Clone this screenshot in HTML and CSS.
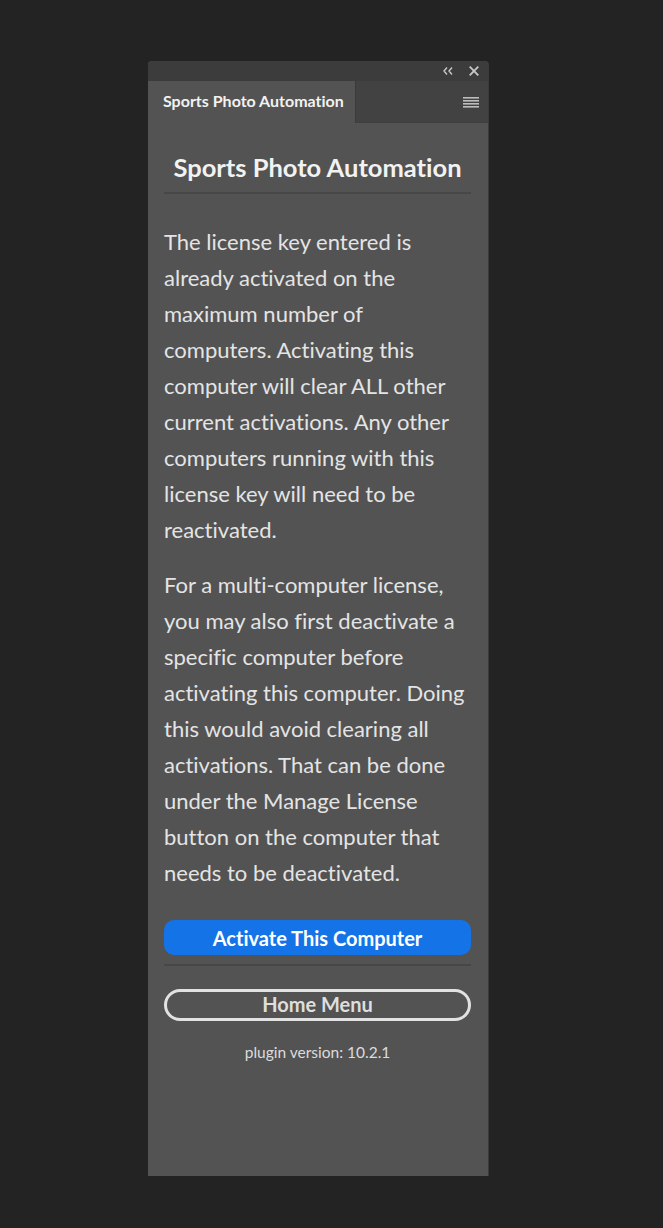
FILE: index.html
```html
<!DOCTYPE html>
<html lang="en">
<head>
  <meta charset="UTF-8" />
  <title>Sports Photo Automation</title>
  <link rel="stylesheet" href="styles.css">
</head>
<body>

  <div class="panel">
    <div class="panel-top">
      <svg class="collapse" width="10" height="8" viewBox="0 0 10 8">
        <path d="M4 0.5 L1 4 L4 7.5 M9 0.5 L6 4 L9 7.5" fill="none" stroke="#c8c8c8" stroke-width="1.4" />
      </svg>
      <svg class="close" width="10" height="10" viewBox="0 0 10 10">
        <path d="M0.7 0.7 L9.3 9.3 M9.3 0.7 L0.7 9.3" stroke="#c8c8c8" stroke-width="1.8" />
      </svg>
    </div>

    <div class="tab-bar">
      <div class="tab">Sports Photo Automation</div>
      <div class="tab-rest">
        <svg class="menu" width="16" height="11" viewBox="0 0 16 11">
          <rect x="0" y="0" width="16" height="1.6" fill="#bdbdbd" />
          <rect x="0" y="3" width="16" height="1.6" fill="#bdbdbd" />
          <rect x="0" y="6" width="16" height="1.6" fill="#bdbdbd" />
          <rect x="0" y="9" width="16" height="1.6" fill="#bdbdbd" />
        </svg>
      </div>
    </div>

    <div class="content">
      <h1>Sports Photo Automation</h1>
      <hr>

      <p>The license key entered is already activated on the maximum number of computers. Activating this computer will clear ALL other current activations. Any other computers running with this license key will need to be reactivated.</p>

      <p>For a multi-computer license, you may also first deactivate a specific computer before activating this computer. Doing this would avoid clearing all activations. That can be done under the Manage License button on the computer that needs to be deactivated.</p>

      <button class="btn-activate">Activate This Computer</button>
      <hr class="btn-rule">
      <button class="btn-home">Home Menu</button>

      <div class="version">plugin version: 10.2.1</div>
    </div>
  </div>

</body>
</html>
```

FILE: styles.css
```css
body {
  margin: 0;
  padding: 0;
  background-color: #232323;
  font-family: Lato, "Open Sans", sans-serif;
  font-variant-ligatures: none;
  color: #e6e6e6;
}

.panel {
  width: 340px;
  height: 1115px;
  margin: 61px 0 0 148px;
  background-color: #535353;
  border-radius: 4px 4px 0 0;
  overflow: hidden;
  box-shadow: 1px 0 0 #3a3a3a, 0 1px 0 #2c2c2c;
}

.panel-top {
  height: 20px;
  background-color: #3c3c3c;
  display: flex;
  align-items: center;
  justify-content: flex-end;
  gap: 16px;
  padding-right: 9px;
}

.tab-bar {
  display: flex;
  height: 42px;
}

.tab {
  width: 207px;
  padding: 10px 0 0 15px;
  box-sizing: border-box;
  font-size: 16px;
  font-weight: bold;
  color: #f2f2f2;
}

.tab-rest {
  flex: 1;
  background-color: #424242;
  border-left: 1px solid #3a3a3a;
  border-bottom: 1px solid #3e3e3e;
  display: flex;
  justify-content: flex-end;
  padding: 16px 9px 0 0;
}

.content {
  padding: 0 17px 0 16px;
}

h1 {
  margin: 0;
  padding-top: 29px;
  text-align: center;
  font-size: 25.5px;
  font-weight: bold;
  color: #f2f2f2;
  line-height: 30px;
}

hr {
  border: none;
  height: 2px;
  background-color: #474747;
  margin: 10px 0 0;
}

p {
  margin: 30px 0 19px;
  font-size: 22px;
  line-height: 36px;
  color: #e4e4e4;
}

p + p {
  margin-top: 0;
}

button {
  display: block;
  width: 100%;
  font-family: inherit;
  font-variant-ligatures: none;
  font-weight: bold;
  font-size: 20px;
  cursor: pointer;
}

.btn-activate {
  margin-top: 29px;
  height: 35px;
  background-color: #1473e6;
  color: #ffffff;
  border: none;
  border-radius: 10px;
}

.btn-rule {
  margin-top: 9px;
}

.btn-home {
  margin-top: 23px;
  height: 32px;
  background-color: transparent;
  color: #dedede;
  border: 3px solid #e2e2e2;
  border-radius: 16px;
  line-height: 22px;
  padding: 0 0 2px;
}

.version {
  margin-top: 22px;
  text-align: center;
  font-size: 15.5px;
  color: #dcdcdc;
}
```
